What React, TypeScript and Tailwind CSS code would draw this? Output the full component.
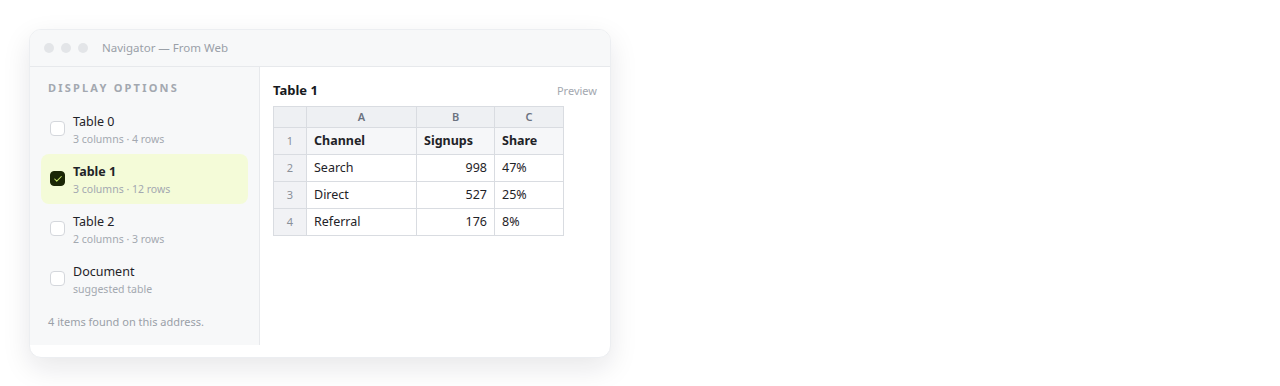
import { Check } from 'lucide-react'

type Item = { name: string; meta: string; checked?: boolean }

const items: Item[] = [
  { name: 'Table 0', meta: '3 columns · 4 rows' },
  { name: 'Table 1', meta: '3 columns · 12 rows', checked: true },
  { name: 'Table 2', meta: '2 columns · 3 rows' },
  { name: 'Document', meta: 'suggested table' },
]

const rows = [
  ['Search', '998', '47%'],
  ['Direct', '527', '25%'],
  ['Referral', '176', '8%'],
]

export default function App() {
  return (
    <div
      className="min-h-[386px] w-[1280px] bg-white pl-[29px] pt-[29px]"
      style={{ fontFamily: '"Noto Sans", "Segoe UI", sans-serif' }}
    >
      <div className="w-[582px] overflow-hidden rounded-xl border border-[#eceef1] bg-white pb-[12px] shadow-[0_10px_28px_rgba(15,23,42,0.10)]">
        {/* title bar */}
        <div className="flex h-[37px] items-center border-b border-[#e7e9ec] bg-[#f7f8f9] px-[14px]">
          <div className="flex gap-[7px]">
            <span className="h-[10px] w-[10px] rounded-full bg-[#e3e5e8]" />
            <span className="h-[10px] w-[10px] rounded-full bg-[#e3e5e8]" />
            <span className="h-[10px] w-[10px] rounded-full bg-[#e3e5e8]" />
          </div>
          <span className="ml-[14px] text-[11.5px] text-[#9aa0a8]">Navigator — From Web</span>
        </div>

        <div className="flex h-[278px]">
          {/* sidebar */}
          <div className="flex w-[230px] flex-col border-r border-[#e7e9ec] bg-[#f7f8f9] px-[11px] pt-[13px]">
            <div className="pl-[7px] text-[11px] font-bold tracking-[0.2em] text-[#a3a8b0]">DISPLAY OPTIONS</div>
            <div className="mt-[7px] flex flex-col">
              {items.map(it => (
                <div
                  key={it.name}
                  className={`flex h-[50px] items-center gap-[8px] rounded-lg pl-[9px] ${it.checked ? 'bg-[#f4fbd8]' : ''}`}
                >
                  <span
                    className={`flex h-[15px] w-[15px] shrink-0 items-center justify-center rounded-[4px] border ${
                      it.checked ? 'border-[#1a2606] bg-[#1a2606]' : 'border-[#d4d7dc] bg-white'
                    }`}
                  >
                    {it.checked && <Check className="h-[10px] w-[10px] text-[#c8e66a]" strokeWidth={2.5} />}
                  </span>
                  <div className="mt-[3px] flex flex-col leading-none">
                    <span className={`text-[12.5px] text-[#1f2328] ${it.checked ? 'font-bold' : ''}`}>{it.name}</span>
                    <span className="mt-[6px] text-[10.5px] text-[#a3a8b0]">{it.meta}</span>
                  </div>
                </div>
              ))}
            </div>
            <div className="mt-[10px] pl-[7px] text-[11px] text-[#9aa0a8]">4 items found on this address.</div>
          </div>

          {/* preview */}
          <div className="flex-1 px-[13px] pt-[14px]">
            <div className="flex items-center justify-between">
              <span className="text-[13px] font-bold text-[#16191d]">Table 1</span>
              <span className="text-[11px] text-[#a3a8b0]">Preview</span>
            </div>
            <table className="mt-[5px] border-collapse text-[12.5px] text-[#1f2328]">
              <thead>
                <tr className="h-[21px] bg-[#eef0f3] text-[11px] font-semibold text-[#6b7280]">
                  <th className="w-[33px] border border-[#d9dce1]" />
                  <th className="w-[110px] border border-[#d9dce1] pt-[2px] font-semibold">A</th>
                  <th className="w-[78px] border border-[#d9dce1] pt-[2px] font-semibold">B</th>
                  <th className="w-[69px] border border-[#d9dce1] pt-[2px] font-semibold">C</th>
                </tr>
              </thead>
              <tbody>
                <tr className="h-[27px] bg-[#f6f7f9] font-bold">
                  <td className="border border-[#d9dce1] bg-[#f1f2f5] pt-[2px] text-center text-[11px] font-normal text-[#8a9099]">1</td>
                  <td className="border border-[#d9dce1] px-[7px] pt-[2px]">Channel</td>
                  <td className="border border-[#d9dce1] px-[7px] pt-[2px]">Signups</td>
                  <td className="border border-[#d9dce1] px-[7px] pt-[2px]">Share</td>
                </tr>
                {rows.map((r, i) => (
                  <tr key={r[0]} className="h-[27px]">
                    <td className="border border-[#d9dce1] bg-[#f1f2f5] pt-[2px] text-center text-[11px] text-[#8a9099]">{i + 2}</td>
                    <td className="border border-[#d9dce1] px-[7px] pt-[2px]">{r[0]}</td>
                    <td className="border border-[#d9dce1] px-[7px] pt-[2px] text-right">{r[1]}</td>
                    <td className="border border-[#d9dce1] px-[7px] pt-[2px]">{r[2]}</td>
                  </tr>
                ))}
              </tbody>
            </table>
          </div>
        </div>
      </div>
    </div>
  )
}
